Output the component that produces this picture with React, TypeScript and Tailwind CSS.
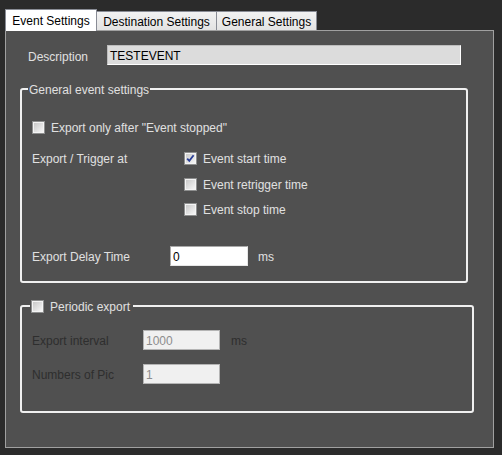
import React from 'react'

function Check({ checked = false }: { checked?: boolean }) {
  return (
    <span className="relative flex h-[13px] w-[13px] shrink-0 border border-[#8e8f8f] bg-[#f4f4f4] p-px">
      <span className="block h-full w-full bg-linear-to-br from-[#c9c9c9] to-[#f6f6f6]" />
      {checked && (
        <svg className="absolute left-0 top-0" width="11" height="11" viewBox="0 0 11 11">
          <path d="M2.2 5.6 L4.3 7.9 L8.6 2.2" fill="none" stroke="#2a3f97" strokeWidth="1.8" />
        </svg>
      )}
    </span>
  )
}

function GroupBox({
  legend,
  className,
  children,
}: {
  legend: React.ReactNode
  className: string
  children: React.ReactNode
}) {
  return (
    <div className={`relative ml-[14px] rounded-[3px] border-2 border-[#f0f0f0] ${className}`}>
      {legend}
      {children}
    </div>
  )
}

export default function App() {
  return (
    <div className="h-[455px] w-[502px] bg-[#2b2b2b] pl-[5px] pt-[9px] font-['Liberation_Sans',Arial,sans-serif] text-[12px] leading-none">
      {/* tab strip */}
      <div className="flex h-[21px] items-end">
        <div className="relative z-10 -mb-px flex h-[22px] w-[92px] items-center justify-center border border-b-0 border-[#898c95] bg-white pt-px text-black">
          Event Settings
        </div>
        <div className="flex h-[19px] w-[120px] items-center justify-center border border-b-0 border-l-0 border-[#898c95] bg-linear-to-b from-[#f2f2f2] to-[#e3e3e3] pt-px text-black">
          Destination Settings
        </div>
        <div className="flex h-[19px] w-[100px] items-center justify-center border border-b-0 border-l-0 border-[#898c95] bg-linear-to-b from-[#f2f2f2] to-[#e3e3e3] pt-px text-black">
          General Settings
        </div>
      </div>

      {/* page */}
      <div className="flex h-[418px] w-[489px] flex-col border border-[#a0a0a0] bg-[#505050] text-[#e0e0e0]">
        <div className="mt-[14px] flex h-[20px] items-center pl-[22px]">
          <span className="w-[79px] pt-[3px]">Description</span>
          <div className="flex h-[20px] w-[354px] items-center border border-[#bdbdbd] border-b-white border-r-white bg-[#dcdcdc] pl-[2px] pt-[2px] text-black">
            TESTEVENT
          </div>
        </div>

        <GroupBox
          className="mt-[23px] h-[195px] w-[448px]"
          legend={
            <span className="absolute -top-[9px] left-[6px] flex h-[16px] items-center bg-[#505050] px-px pt-px">
              General event settings
            </span>
          }
        >
          <div className="mt-[29px] flex h-[16px] items-center pl-[10px]">
            <Check />
            <span className="ml-[6px] pt-[2px]">Export only after "Event stopped"</span>
          </div>

          <div className="mt-[15px] flex pl-[10px]">
            <span className="flex h-[16px] w-[152px] items-center pt-[2px]">Export / Trigger at</span>
            <div className="flex flex-col">
              <div className="flex h-[16px] items-center">
                <Check checked />
                <span className="ml-[6px] pt-[2px]">Event start time</span>
              </div>
              <div className="mt-[10px] flex h-[16px] items-center">
                <Check />
                <span className="ml-[6px] pt-[2px]">Event retrigger time</span>
              </div>
              <div className="mt-[9px] flex h-[16px] items-center">
                <Check />
                <span className="ml-[6px] pt-[2px]">Event stop time</span>
              </div>
            </div>
          </div>

          <div className="mt-[29px] flex h-[20px] items-center pl-[10px]">
            <span className="w-[138px] pt-[2px]">Export Delay Time</span>
            <div className="flex h-[20px] w-[78px] items-center border border-[#a9a9a9] border-b-[#e6e6e6] border-r-[#e6e6e6] bg-white pl-[2px] pt-px text-black">
              0
            </div>
            <span className="ml-[10px] pt-[2px]">ms</span>
          </div>
        </GroupBox>

        <GroupBox
          className="mt-[22px] h-[108px] w-[454px]"
          legend={
            <span className="absolute -top-[9px] left-[8px] flex h-[16px] items-center bg-[#505050] pl-px pr-[3px]">
              <Check />
              <span className="ml-[6px] pt-[2px]">Periodic export</span>
            </span>
          }
        >
          <div className="mt-[23px] flex h-[20px] items-center pl-[10px] text-[#2e2e2e]">
            <span className="w-[111px] pt-[2px]">Export interval</span>
            <div className="flex h-[20px] w-[77px] items-center border border-[#b4b4b4] bg-[#f0f0f0] pl-[2px] pt-px text-[#8d8d8d]">
              1000
            </div>
            <span className="ml-[11px] pt-[2px]">ms</span>
          </div>
          <div className="mt-[14px] flex h-[20px] items-center pl-[10px] text-[#2e2e2e]">
            <span className="w-[111px] pt-[2px]">Numbers of Pic</span>
            <div className="flex h-[20px] w-[77px] items-center border border-[#b4b4b4] bg-[#f0f0f0] pl-[2px] pt-px text-[#8d8d8d]">
              1
            </div>
          </div>
        </GroupBox>
      </div>
    </div>
  )
}
